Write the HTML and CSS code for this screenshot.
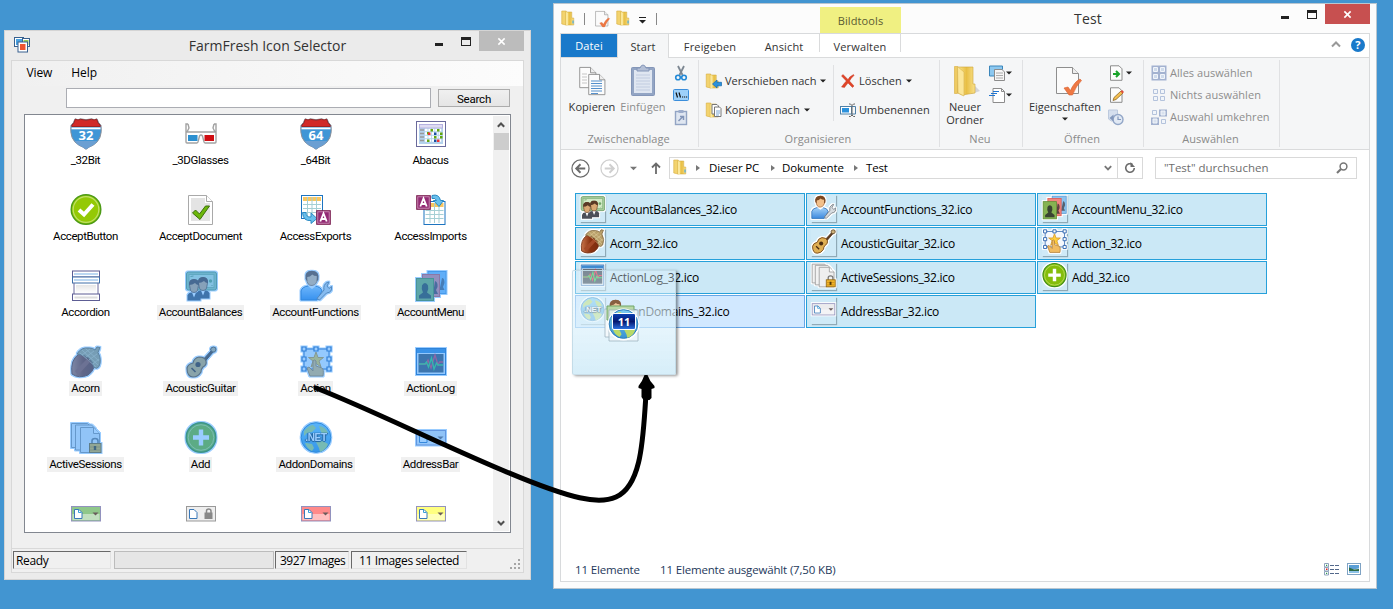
FILE: index.html
```html
<!DOCTYPE html>
<html lang="de">
<head>
<meta charset="utf-8">
<title>FarmFresh Icon Selector</title>
<link rel="stylesheet" href="styles.css">
</head>
<body>
<svg class="defs" width="0" height="0" aria-hidden="true">
  <defs>
    <filter id="tint" x="-10%" y="-10%" width="120%" height="120%" color-interpolation-filters="sRGB">
      <feMorphology in="SourceAlpha" operator="dilate" radius="0.8" result="fat"/>
      <feFlood flood-color="#fff"/><feComposite in2="fat" operator="in" result="halo"/>
      <feFlood flood-color="#3399ff" flood-opacity=".5"/><feComposite in2="fat" operator="in" result="blue"/>
      <feMerge><feMergeNode in="halo"/><feMergeNode in="SourceGraphic"/><feMergeNode in="blue"/></feMerge>
    </filter>
    <filter id="halo" x="-10%" y="-10%" width="120%" height="120%" color-interpolation-filters="sRGB">
      <feMorphology in="SourceAlpha" operator="dilate" radius="1" result="fat"/>
      <feFlood flood-color="#fff"/><feComposite in2="fat" operator="in" result="halo"/>
      <feMerge><feMergeNode in="halo"/><feMergeNode in="SourceGraphic"/></feMerge>
    </filter>
    <linearGradient id="gFolder" x1="0" x2="1"><stop offset="0" stop-color="#fbe58f"/><stop offset=".5" stop-color="#e8bf45"/><stop offset="1" stop-color="#f9e08a"/></linearGradient>
    <linearGradient id="gGlobe" x1="0" x2="0" y1="0" y2="1"><stop offset="0" stop-color="#7fcdf2"/><stop offset="1" stop-color="#3793d2"/></linearGradient>
    <linearGradient id="gBlue" x1="0" x2="0" y1="0" y2="1"><stop offset="0" stop-color="#a5d2f8"/><stop offset="1" stop-color="#3d8ade"/></linearGradient>
    <linearGradient id="gNut" x1="0" x2="1"><stop offset="0" stop-color="#c8744a"/><stop offset=".5" stop-color="#8c3412"/><stop offset="1" stop-color="#7a2c10"/></linearGradient>
    <linearGradient id="gPage" x1="0" x2="0" y1="0" y2="1"><stop offset="0" stop-color="#e6e6e6"/><stop offset="1" stop-color="#fff"/></linearGradient>
  </defs>
  <symbol id="shield" viewBox="0 0 32 32">
    <path d="M5 .8q3 1.800 5.500 0q5.500 1.800 11 0q3 1.800 5.500 0q1 4 4 6.500q2 14-8 20q-4 1.500-7 4q-3-2.500-7-4q-10-6-8-20q3-2.500 4-6.500z" fill="#3f96d6" stroke="#8a8f98"/>
    <path d="M4.500 23q2 3 5 4.500l6.500 3.800l6.500-3.800q3-1.500 5-4.500z" fill="#6b9fd2"/>
    <path d="M5.300 1.300q3 1.400 5.200 0q5.500 1.800 11 0q2.500 1.400 5.200 0q1 4 3.500 6v1.200H1.800V7.300q2.500-2 3.500-6z" fill="#d12a28" stroke="#9b2422" stroke-width="1"/>
    <path d="M1.500 9.500h29v1.800h-29z" fill="#fff"/>
  </symbol>
  <symbol id="glasses" viewBox="0 0 32 32">
    <path d="M3 6H1v18q0 1 1 1h10q1 0 1.500-3l1-4q1.500-2 3 0l1 4q.5 3 1.500 3h10q1 0 1-1V6h-2M3 6l1 4-2 4h28l-2-4 1-4" fill="none" stroke="#a2a2a2" stroke-width="1.400"/>
    <path d="M3 17h9.500v6H3z" fill="#2b8fd0"/><path d="M19.500 17H29v6h-9.500z" fill="#cf0d12"/>
  </symbol>
  <symbol id="abacus" viewBox="0 0 32 32">
    <rect x="1.500" y="3.500" width="29" height="25" fill="#fff" stroke="#6a6a9c"/>
    <rect x="4" y="6" width="24" height="20" fill="#b4d2ec"/><rect x="4.500" y="6.500" width="23" height="3.500" fill="#dedcf2" stroke="#b0a8dc" stroke-width=".8"/>
    <path d="M5 12h4M5 15.500h4M5 19h4M5 22.500h4" stroke="#999" stroke-width="1.500"/>
    <path d="M10 12h17M10 15.500h17M10 19h17M10 22.500h17" stroke="#fff" stroke-width="2.400" stroke-dasharray="2.600 .8"/>
    <path d="M12 14h2.500v2.500H12zM15.500 11h2.500v2.500h-2.500zM22 11h2.500v2.500H22zM25 14.500h2.500V17H25zM19 18h2.500v2.500H19zM12 21.500h2.500V24H12zM25 18h2.500v2.500H25z" fill="#62a50f"/>
    <path d="M13 14.500h2.500V17H13zM22 21.500h2.500V24H22z" fill="#e33"/><path d="M19 14.500h2.500V17H19zM19 21.500h2.500V24H19z" fill="#1b4fa0"/>
  </symbol>
  <symbol id="acceptbtn" viewBox="0 0 32 32">
    <circle cx="16" cy="15.500" r="14.800" fill="#94c905" stroke="#4c9a16" stroke-width="1.400"/><circle cx="16" cy="15.500" r="12.800" fill="none" stroke="#bfe069" stroke-width="1.200"/>
    <path d="M9 16l5 4.500 9-10" fill="none" stroke="#fff" stroke-width="4"/>
  </symbol>
  <symbol id="acceptdoc" viewBox="0 0 32 32">
    <path d="M3.500 1.500h18l6 6v23h-24z" fill="#fff" stroke="#a9a9a9"/><path d="M6 4h14v5h5v18H6z" fill="#e4e4e4"/><path d="M21.500 1.500v6h6" fill="#fff" stroke="#a9a9a9"/>
    <path d="M7.500 19l3-3 4 4 6-8h4l-9.500 13.500z" fill="#6db70a" stroke="#3c6f0d"/>
  </symbol>
  <symbol id="sheet" viewBox="0 0 22 24">
    <rect x=".5" y=".5" width="21" height="23" fill="#fff" stroke="#1d74c0"/><path d="M2 2h18v4H2z" fill="#f8c660"/>
    <path d="M2 9.500h18M2 13.500h18M2 17.500h18M6.500 2v20M11 2v20M15.500 2v20" stroke="#a5cfd4"/>
  </symbol>
  <symbol id="abox" viewBox="0 0 15 15">
    <rect x=".7" y=".7" width="13.600" height="13.600" fill="#932b74" stroke="#7b2252"/><rect x="1.800" y="1.800" width="11.400" height="11.400" fill="none" stroke="#d399bd" stroke-width=".8"/>
    <path d="M4.300 11.500L7.500 3.500l3.200 8M5.500 9h4" stroke="#fff" stroke-width="1.800" fill="none"/>
  </symbol>
  <symbol id="accexp" viewBox="0 0 32 32">
    <use href="#sheet" x="1" y="1" width="22" height="24"/><path d="M2.500 18.500h3.500q0 5 5 4.500v-4l6 5.500-6 5v-3q-8 1-8.500-8z" fill="#69bfec" stroke="#2b8ac4"/>
    <use href="#abox" x="16" y="16" width="15" height="15"/>
  </symbol>
  <symbol id="accimp" viewBox="0 0 32 32">
    <use href="#sheet" x="8" y="7" width="23" height="24"/><path d="M17 1.500q7-2 8.500 5h3l-4.500 6-5.500-6h3q-1-3-4.500-2z" fill="#69bfec" stroke="#2b8ac4"/>
    <use href="#abox" x="1" y="1" width="15" height="15"/>
  </symbol>
  <symbol id="accordion" viewBox="0 0 32 32">
    <rect x="2.500" y="1" width="27" height="6" fill="#fff" stroke="#5d5d94"/><rect x="2.500" y="7" width="27" height="6" fill="#fff" stroke="#3e6fa8"/>
    <path d="M4 13v11M28 13v11" stroke="#6a6a9c"/><rect x="6" y="15" width="20" height="8" fill="url(#gPage)"/><rect x="2.500" y="24" width="27" height="6.500" fill="#fff" stroke="#5d5d94"/>
    <path d="M4 4h24M4 10h24" stroke="#a6ccee" stroke-width="1.400"/><path d="M4.500 27.500h23" stroke="#ddd" stroke-width="2"/>
  </symbol>
  <symbol id="man" viewBox="0 0 14 22">
    <path d="M.5 21.500v-5q1-3 4-3h5q3 0 4 3v5z" fill="#4b4f59"/><path d="M5 13.500l2 5 2-5z" fill="#fff"/>
    <path d="M2.500 6q-.5-5 4.500-5.500Q12 1 11.500 6l-1 5.500q-3.500 4-7 0z" fill="#d9a873" stroke="#6b3f21" stroke-width=".8"/><path d="M2 6q-.5-6 5-6t5 6q-2 .5-4-2-2.500 2-6 2z" fill="#5a3a26"/>
  </symbol>
  <symbol id="balances" viewBox="0 0 32 32">
    <rect x="1.500" y="2" width="30" height="18" rx="2" fill="#a6cc9a" stroke="#6d9c66"/><rect x="4" y="4.500" width="25" height="13" fill="#d3eac6" stroke="#8cb884"/><circle cx="25.500" cy="11" r="1.700" fill="#6fa567"/><path d="M5.500 6.500l3-.5M27.500 15l-1 1" stroke="#6fa567"/>
    <use href="#man" x="11" y="7" width="14" height="22"/><use href="#man" x="2" y="9" width="14" height="22"/>
  </symbol>
  <symbol id="functions" viewBox="0 0 32 32">
    <path d="M1 30v-9q1-4 7-5h7q6 1 7 5l-5 9z" fill="url(#gBlue)" stroke="#2d72b8"/><path d="M8 16l4 3 4-3-1-3H9z" fill="#fff"/>
    <path d="M6.500 8Q6 2 12 1.500T17.500 8q-.5 7-5.500 7.500T6.500 8z" fill="#f2c08a" stroke="#9a5d2c" stroke-width=".8"/><path d="M5.500 9Q4 1 12 .8 20 1 18.300 10l-1.500 1V6q-3 0-4.500-1.500Q10 7 7.200 7v4z" fill="#7a4721"/>
    <path d="M17 28.500l7-8.500q-1-5 3-7.500l2-.5-2 4 2 2.500 2.500-2q1 6-5 6.500L19.500 30z" fill="#d7dce0" stroke="#70767c"/>
  </symbol>
  <symbol id="menu" viewBox="0 0 32 32">
    <rect x="13" y="1.500" width="18" height="22" fill="#8cc3f0" stroke="#5a9bd4"/><path d="M27 8q2.500 0 2.500 5l-1.500 4 1.500 3h-5z" fill="#56606f"/>
    <rect x="7.500" y="4.500" width="17" height="22" fill="#f0877f" stroke="#e0574e"/><path d="M20 11q3 1 2.500 6l-1.500 3 2 4h-5z" fill="#5e4040"/>
    <rect x="1.500" y="8.500" width="17" height="22" fill="#86b352" stroke="#5c8f35"/><path d="M4 28.500v-3l4-3q-2-3-1-7 1-2.500 3-2.500t3 2.500q1 4-1 7l4 3v3z" fill="#3a4433"/>
  </symbol>
  <symbol id="acorn" viewBox="0 0 32 32">
    <path d="M2 28q-2-14 7-20 8-5 14 4 4 11-5 17-9 4-16-1z" fill="url(#gNut)" stroke="#713013"/>
    <path d="M7 8q4-7 12-6 4 0 6 2l2-3 3 .5-2 5q4 7 1 14-2 3-5 1-2-12-17-13.500z" fill="#b9a06a" stroke="#806841"/><path d="M12 4l16 15M16 3l13 12M10 7l16 14M20 3l-8 6M24 5l-8 6M27 8l-8 6M29 13l-6 5" stroke="#ddcc9b" stroke-width=".8"/>
    <path d="M5 25L17 13l3 3L8 29z" fill="#a54a28"/>
  </symbol>
  <symbol id="guitar" viewBox="0 0 32 32">
    <path d="M15 17L27 4l1.500 1.500L17 19z" fill="#5e3a1c" stroke="#4b2f19"/><path d="M25.500 4q0-3 3-3t2.500 3q-1 3-3.500 2z" fill="#ceb17a" stroke="#5b4426"/>
    <path d="M2 22q1-4 6-5 1-5 6-6 6 0 7 4 1 4-3 6-2 2-2 5-3 5-8 5-6 0-6-9z" fill="#dfaf54" stroke="#7b4c19" stroke-width="1.200"/><circle cx="13" cy="18.500" r="2.600" fill="#4a2b10"/><path d="M6.500 22l4 4" stroke="#4a2b10" stroke-width="1.600"/>
  </symbol>
  <symbol id="action" viewBox="0 0 32 32">
    <rect x="4" y="3" width="25" height="20" fill="#f5f8fc" stroke="#2f66b0"/>
    <path d="M16 6l2 5.500h5.500L19 15l2 6-5-3.500L11 21l2-6-4.500-3.500H14z" fill="#ffcf3b" stroke="#d4962b"/>
    <path d="M10 30l-3-8 2-1 4 4V15q1.500-2 3 0v5l6 2q2 1 1 8z" fill="#f1bc62" stroke="#b3803a"/>
    <g fill="#fff" stroke="#2f66b0" stroke-width="1.200"><path d="M2 1h4v4H2zM14 1h4v4h-4zM27 1h4v4h-4zM2 11h4v4H2zM27 11h4v4h-4zM2 21h4v4H2zM27 21h4v4h-4z"/></g>
  </symbol>
  <symbol id="log" viewBox="0 0 32 32">
    <rect x="1.500" y="2.500" width="29" height="26" fill="#f3f7fb" stroke="#2d6cb0"/><path d="M2 3h28v4H2z" fill="#3f8ad0"/><rect x="3.500" y="8" width="25" height="18.500" fill="#45505c"/>
    <path d="M4 18h7l2-4 3 8 4-13 3 10 1.500-3H28" fill="none" stroke="#e8344e" stroke-width="1.300"/><path d="M4 18h6l1.500-2 2 5 3-9 2.500 11 2.500-6 1.500 2H28" fill="none" stroke="#39d45b" stroke-width="1.300"/>
  </symbol>
  <symbol id="sessions" viewBox="0 0 32 32">
    <path d="M1.500 1.500h16l4 4v20h-20z" fill="#f2f2f2" stroke="#969696"/><path d="M5.500 3h16l4 4v21h-20z" fill="#f2f2f2" stroke="#969696"/><path d="M10.500 5.500h13l6 6v19h-19z" fill="#efefef" stroke="#969696"/><path d="M23.500 5.500v6h6" fill="#fff" stroke="#969696"/>
    <path d="M22 22v-3q0-2.500 3-2.500t3 2.500v3" fill="none" stroke="#777" stroke-width="1.600"/><rect x="19.500" y="21.500" width="11.500" height="9" fill="#f0b429" stroke="#8d6310"/><path d="M20 25h10M20 28h10" stroke="#c88c17"/><path d="M25 24v4" stroke="#4f3607" stroke-width="2.400"/>
  </symbol>
  <symbol id="add" viewBox="0 0 32 32">
    <circle cx="16" cy="15.500" r="14.800" fill="#84bd0b" stroke="#3f8d18" stroke-width="1.400"/><circle cx="16" cy="15.500" r="12.800" fill="none" stroke="#bfe069"/>
    <path d="M16 7.500v16M8 15.500h16" stroke="#fff" stroke-width="4.400"/>
  </symbol>
  <symbol id="globe" viewBox="0 0 32 32">
    <circle cx="16" cy="15.500" r="14.800" fill="url(#gGlobe)" stroke="#2b7bb8"/>
    <path d="M4 9q5-6 9-6l3 3-4 4-5 1-3 3zM19 4q7 1 9 7l-4 2-3-3zM16 20l7-1 5 3q-2 6-8 8l-1-4zM6 21l6 1 2 4-2 3q-5-2-7-8z" fill="#b9da68"/>
  </symbol>
  <symbol id="addr" viewBox="0 0 32 32">
    <rect x="1.500" y="8.500" width="29" height="14.500" fill="currentColor" stroke="#9292be"/><path d="M2.500 16h27v6h-27z" fill="#fff" opacity=".45"/>
    <path d="M4.500 11.500h4.500l3 3v6H4.500z" fill="#fff" stroke="#3a78b8"/><path d="M8.500 11.500v3h3" fill="none" stroke="#3a9fd8"/><path d="M22.500 14.500h6l-3 3z" fill="#6a5c5c"/>
  </symbol>
  <symbol id="folder" viewBox="1 0 14.500 16">
    <path d="M2 1h4.500v14L2 14z" fill="#f3d36e" stroke="#d6ad3c" stroke-width=".6"/><path d="M6 2h6v6h2v7H6z" fill="url(#gFolder)" stroke="#cfa435" stroke-width=".5"/><path d="M6.200 2l2 1v12l-2 .5z" fill="#fae79b"/><path d="M13.300 10.500v3" stroke="#53aee0" stroke-width="1.300"/>
  </symbol>
  <symbol id="check" viewBox="0 0 32 32">
    <path d="M4.500 2.500h16l6 6v20h-22z" fill="#fbfbfb" stroke="#8e8e8e"/><path d="M20.500 2.500v6h6" fill="#eee" stroke="#8e8e8e"/><path d="M12 23l4-1 2.500 3.500Q22 17 28 14l1.500 1.500Q24 21 20.500 30h-3.500z" fill="#ee7843" stroke="#d95f2d" stroke-width=".6"/>
  </symbol>
  <symbol id="page" viewBox="0 0 20 24">
    <path d="M.8.8h12l6 6v16.500h-18z" fill="#fcfcfc" stroke="#8c8c8c"/><path d="M12.800.8v6h6" fill="#eee" stroke="#8c8c8c"/>
  </symbol>
  <symbol id="drop" viewBox="0 0 6 4"><path d="M0 .5h6L3 3.500z" fill="currentColor"/></symbol>
</svg>

<main class="desktop">
  <section class="window selector">
    <header class="sel-title">
      <svg class="app-icon" viewBox="0 0 16 16"><g stroke="#38618f" stroke-width="1"><rect x=".5" y=".5" width="9" height="9" fill="#fff"/><path d="M2 2h6v6H2z" fill="#4aa3e2" stroke="none"/><rect x="8.500" y="1.500" width="7" height="8" fill="#fff"/><path d="M9.500 3h5v5h-5z" fill="#9bc850" stroke="none"/><rect x="4" y="5" width="9.500" height="10" fill="#fff"/><path d="M6 7h5.500v6H6z" fill="#ee5430" stroke="none"/></g></svg>
      <h1 class="title-text">FarmFresh Icon Selector</h1>
      <div class="controls"><i class="min"></i><i class="max"></i><span class="close gray"><svg viewBox="0 0 10 10"><path d="M1.500 1.500l7 7M8.500 1.500l-7 7" stroke="#fff" stroke-width="1.700"/></svg></span></div>
    </header>
    <div class="sel-client">
      <nav class="menubar"><span>View</span><span>Help</span></nav>
      <div class="search-row"><div class="field"></div><div class="button">Search</div></div>
      <div class="list">
        <div class="cells">
          <div class="cell"><div class="pic"><svg><use href="#shield"/></svg><b>32</b></div><span>_32Bit</span></div>
          <div class="cell"><div class="pic"><svg><use href="#glasses"/></svg></div><span>_3DGlasses</span></div>
          <div class="cell"><div class="pic"><svg><use href="#shield"/></svg><b>64</b></div><span>_64Bit</span></div>
          <div class="cell"><div class="pic"><svg><use href="#abacus"/></svg></div><span>Abacus</span></div>
          <div class="cell"><div class="pic"><svg><use href="#acceptbtn"/></svg></div><span>AcceptButton</span></div>
          <div class="cell"><div class="pic"><svg><use href="#acceptdoc"/></svg></div><span>AcceptDocument</span></div>
          <div class="cell"><div class="pic"><svg><use href="#accexp"/></svg></div><span>AccessExports</span></div>
          <div class="cell"><div class="pic"><svg><use href="#accimp"/></svg></div><span>AccessImports</span></div>
          <div class="cell"><div class="pic"><svg><use href="#accordion"/></svg></div><span>Accordion</span></div>
          <div class="cell on"><div class="pic"><svg><use href="#balances"/></svg></div><span>AccountBalances</span></div>
          <div class="cell on"><div class="pic"><svg><use href="#functions"/></svg></div><span>AccountFunctions</span></div>
          <div class="cell on"><div class="pic"><svg><use href="#menu"/></svg></div><span>AccountMenu</span></div>
          <div class="cell on"><div class="pic"><svg><use href="#acorn"/></svg></div><span>Acorn</span></div>
          <div class="cell on"><div class="pic"><svg><use href="#guitar"/></svg></div><span>AcousticGuitar</span></div>
          <div class="cell on"><div class="pic"><svg><use href="#action"/></svg></div><span>Action</span></div>
          <div class="cell on"><div class="pic"><svg><use href="#log"/></svg></div><span>ActionLog</span></div>
          <div class="cell on"><div class="pic"><svg><use href="#sessions"/></svg></div><span>ActiveSessions</span></div>
          <div class="cell on"><div class="pic"><svg><use href="#add"/></svg></div><span>Add</span></div>
          <div class="cell on"><div class="pic"><svg><use href="#globe"/></svg><em>.NET</em></div><span>AddonDomains</span></div>
          <div class="cell on"><div class="pic"><svg class="c-grey"><use href="#addr"/></svg></div><span>AddressBar</span></div>
          <div class="cell"><div class="pic"><svg class="c-green"><use href="#addr"/></svg></div></div>
          <div class="cell"><div class="pic"><svg viewBox="0 0 32 32"><rect x="1.500" y="8.500" width="29" height="14.500" fill="#eee" stroke="#999"/><path d="M4.500 11.500h4.500l3 3v6H4.500z" fill="#fff" stroke="#3a78b8"/><path d="M21.500 15v-2q0-2 2.200-2t2.300 2v2" fill="none" stroke="#888" stroke-width="1.500"/><rect x="19.500" y="14.500" width="8" height="6.500" fill="#888"/></svg></div></div>
          <div class="cell"><div class="pic"><svg class="c-red"><use href="#addr"/></svg></div></div>
          <div class="cell"><div class="pic"><svg class="c-yellow"><use href="#addr"/></svg></div></div>
        </div>
        <div class="scroll"><svg viewBox="0 0 8 6"><path d="M.8 4.800L4 1.500l3.200 3.300" fill="none" stroke="#505050" stroke-width="2"/></svg><div class="thumb"></div><svg class="down" viewBox="0 0 8 6"><path d="M.8 1.200L4 4.500l3.200-3.300" fill="none" stroke="#505050" stroke-width="2"/></svg></div>
      </div>
      <footer class="sel-status"><div class="panel p1">Ready</div><div class="progress"></div><div class="panel p2">3927 Images</div><div class="panel p3">11 Images selected</div>
        <svg class="grip" viewBox="0 0 10 10" fill="#a5a5a5"><path d="M8 0h2v2H8zM4 4h2v2H4zM8 4h2v2H8zM0 8h2v2H0zM4 8h2v2H4zM8 8h2v2H8z"/></svg></footer>
    </div>
  </section>

  <section class="window explorer">
    <header class="ex-title">
      <div class="quick"><svg class="s16"><use href="#folder"/></svg><i class="bar"></i><svg class="q18"><use href="#check"/></svg><svg class="s16 q3"><use href="#folder"/></svg><svg class="cust" viewBox="0 0 7 7"><path d="M0 0h7v1H0zM0 3h7L3.500 6.500z" fill="#222"/></svg><i class="bar"></i></div>
      <div class="tooltab">Bildtools</div>
      <h2 class="title-text">Test</h2>
      <div class="controls"><i class="min"></i><i class="max"></i><span class="close red"><svg viewBox="0 0 10 10"><path d="M1.500 1.500l7 7M8.500 1.500l-7 7" stroke="#fff" stroke-width="1.800"/></svg></span></div>
    </header>
    <div class="ex-client">
      <nav class="tabs"><span class="tab file">Datei</span><span class="tab start">Start</span><span class="tab t3">Freigeben</span><span class="tab t4">Ansicht</span><span class="tab t5">Verwalten</span>
        <svg class="fold" viewBox="0 0 10 7"><path d="M1 5.500L5 1.500l4 4" fill="none" stroke="#999" stroke-width="2"/></svg><span class="help">?</span></nav>
      <div class="ribbon">
        <div class="group g1">
          <div class="tools">
            <div class="big b1"><svg viewBox="0 0 32 32"><use href="#page" x="3" y="1" width="18" height="23"/><use href="#page" x="12" y="8" width="18" height="23"/><path d="M6 9h5M6 12h5M6 15h5M6 18h5" stroke="#c6c6c6"/><path d="M15 16h11M15 18.500h11M15 21h11M15 23.500h11M15 26h11M15 28.500h7" stroke="#5590cc" stroke-width="1.200"/></svg><span>Kopieren</span></div>
            <div class="big b2 off"><svg viewBox="0 0 32 32"><rect x="4.500" y="2.500" width="23" height="28" rx="1" fill="#93a5c4" stroke="#8496b8"/><rect x="7" y="5" width="18" height="23" fill="#dfe6f1"/><path d="M9 10h14M9 13h14M9 16h14M9 19h14M9 22h14M9 25h14" stroke="#c1cce0"/><path d="M10 6V3h3q1-3 3-3t3 3h3v3z" fill="#b3bfd6" stroke="#8496b8"/></svg><span>Einfügen</span></div>
            <div class="col c1">
              <svg class="s16" viewBox="0 0 16 16"><path d="M5 1l4.500 9M11 1L6.500 10" stroke="#7d8792" stroke-width="1.800"/><circle cx="5" cy="12.500" r="2.300" fill="none" stroke="#2389d6" stroke-width="1.600"/><circle cx="11" cy="12.500" r="2.300" fill="none" stroke="#2389d6" stroke-width="1.600"/></svg>
              <svg class="s16" viewBox="0 0 16 16"><rect x=".5" y="2.500" width="15" height="11" rx="1" fill="#9dd0fa" stroke="#3b8edb"/><path d="M3 5.500l1.500 5M6 5.500l1.500 5M9 10h1.200M11 10h1.200M13 10h1.200" stroke="#111" stroke-width="1.200"/></svg>
              <svg class="s16" viewBox="0 0 16 16"><rect x="2.500" y="2.500" width="11" height="13" fill="#dfe6f1" stroke="#92a4c4" stroke-width="1.400"/><path d="M5.500 1h5v3h-5z" fill="#9caccb"/><path d="M5.500 12l4-4M7 7.500h3.500V11" fill="none" stroke="#8295b8" stroke-width="1.500"/></svg>
            </div>
          </div><div class="caption">Zwischenablage</div>
        </div>
        <div class="group g2">
          <div class="tools">
            <div class="col c2">
              <div class="cmd"><svg class="s16" viewBox="0 0 16 16"><use href="#folder" x="-1" width="15" height="16"/><path d="M6.500 11l4.500-4v2.300h4.500v3.500H11V15z" fill="#2b91dc" stroke="#1469ad" stroke-width=".7"/></svg><span>Verschieben nach</span><svg class="drop"><use href="#drop"/></svg></div>
              <div class="cmd"><svg class="s16" viewBox="0 0 16 16"><use href="#folder" x="-1" width="15" height="16"/><path d="M6 2.500h5l1.500 1.500v8H6z" fill="#fff" stroke="#777"/><path d="M8.500 5h5l1.500 1.500v8H8.500z" fill="#fff" stroke="#777"/><path d="M10 9h4M10 11h4M10 13h3" stroke="#5590cc" stroke-width=".8"/></svg><span>Kopieren nach</span><svg class="drop"><use href="#drop"/></svg></div>
            </div>
            <div class="col c3">
              <div class="cmd"><svg class="s16" viewBox="0 0 16 16"><path d="M1.500 3L3 1.500l5 5Q10 3 13.500 1.500l.5 1Q11 5 9.500 8l4.500 5-1.500 1.500-4.500-4.500q-2.500 3-3.500 4.500L1.500 14Q4 10.500 6.300 8z" fill="#e04428" stroke="#c03018" stroke-width=".4"/></svg><span>Löschen</span><svg class="drop"><use href="#drop"/></svg></div>
              <div class="cmd"><svg class="s16" viewBox="0 0 16 16"><rect x=".5" y="4.500" width="11" height="7.500" fill="#fff" stroke="#4d80a8"/><path d="M2 6h7v4.500H2z" fill="#2b91dc"/><path d="M12 4.500h3.500V12H12" fill="none" stroke="#4d80a8"/><path d="M9 2h1.500L12 3.500 13.500 2H15M12 3.500v9.500M9 14.500h1.500L12 13l1.500 1.500H15" fill="none" stroke="#666"/></svg><span>Umbenennen</span></div>
            </div>
          </div><div class="caption">Organisieren</div>
        </div>
        <div class="group g3">
          <div class="tools">
            <div class="big b3"><svg viewBox="0 0 32 32"><path d="M22 29l9-3-5-5z" fill="#c6c8cc" opacity=".7"/><path d="M5.500 1.500h3v27l-3 0z" fill="#efcb62" stroke="#d6ad3c" stroke-width=".6"/><path d="M9 2h15v17h2v9l-13 2-4-2z" fill="url(#gFolder)" stroke="#cfa435" stroke-width=".6"/><path d="M8.500 1.500l6.500 5.500v24l-6-3z" fill="#fbe699" stroke="#d9b44c" stroke-width=".6"/></svg><span>Neuer<br>Ordner</span></div>
            <div class="col c4">
              <div class="cmd"><svg class="s16" viewBox="0 0 16 16"><path d="M.5 1h13v3.500H6V11H.5z" fill="#8cc8f0" stroke="#3b86bb"/><path d="M5.500 4.500h7.500l2.500 2.500v8.500h-10z" fill="#f6f6f6" stroke="#8c8c8c"/><path d="M7 8h7M7 10.500h7M7 13h7" stroke="#999" stroke-width=".8"/></svg><svg class="drop"><use href="#drop"/></svg></div>
              <div class="cmd"><svg class="s16" viewBox="0 0 16 16"><path d="M4 1.500h8.500l3 3v11H4z" fill="#fff" stroke="#8c8c8c"/><path d="M12.500 1.500v3h3" fill="none" stroke="#8c8c8c"/><path d="M4 4.500h6M2 6.500h6M0 8.500h6" stroke="#2276d0" stroke-width="1.200"/></svg><svg class="drop"><use href="#drop"/></svg></div>
            </div>
          </div><div class="caption">Neu</div>
        </div>
        <div class="group g4">
          <div class="tools">
            <div class="big b4"><svg class="props"><use href="#check"/></svg><span>Eigenschaften</span><svg class="drop"><use href="#drop"/></svg></div>
            <div class="col c5">
              <div class="cmd"><svg class="s16" viewBox="0 0 16 16"><path d="M2.500.8h8.500l3 3v11.500H2.500z" fill="#fcfcfc" stroke="#8c8c8c"/><path d="M5 9h5M8 6l3 3-3 3" fill="none" stroke="#18a329" stroke-width="2"/></svg><svg class="drop"><use href="#drop"/></svg></div>
              <div class="cmd"><svg class="s16" viewBox="0 0 16 16"><path d="M2.500.8h8.500l3 3v11.500H2.500z" fill="#fcfcfc" stroke="#8c8c8c"/><path d="M5 13.500l1-3 7-6.500 2 2-7 6.500z" fill="#f5bf4f" stroke="#896526" stroke-width=".8"/><path d="M12.500 4.500L14 3l2 2-1.500 1.500z" fill="#de4d3c"/></svg></div>
              <div class="cmd"><svg class="s16" viewBox="0 0 16 16"><path d="M.5 1h9v9l-6 2-3-2z" fill="#d5dfee" stroke="#bdcade"/><circle cx="10" cy="10.500" r="5" fill="#e1e9f4" stroke="#93a7c8" stroke-width="1.400"/><path d="M10 7.500v3h3" fill="none" stroke="#8398bc" stroke-width="1.200"/><path d="M1.500 9l4-3.500v7z" fill="#8398bc"/></svg></div>
            </div>
          </div><div class="caption">Öffnen</div>
        </div>
        <div class="group g5 off">
          <div class="tools">
            <div class="col c6">
              <div class="cmd"><svg class="s16" viewBox="0 0 16 16"><path d="M.5.5h15v15H.5z" fill="#a3b2d0"/><path d="M2.500 2.500h4v4h-4zM9.500 2.500h4v4h-4zM2.500 9.500h4v4h-4zM9.500 9.500h4v4h-4z" fill="#cfdbeb" stroke="#f1f5fa"/></svg><span>Alles auswählen</span></div>
              <div class="cmd"><svg class="s16" viewBox="0 0 16 16"><path d="M2.500 2.500h4v4h-4zM9.500 2.500h4v4h-4zM2.500 9.500h4v4h-4zM9.500 9.500h4v4h-4z" fill="#f1f5fa" stroke="#b4c3dc"/></svg><span>Nichts auswählen</span></div>
              <div class="cmd"><svg class="s16" viewBox="0 0 16 16"><path d="M8 .5h8v7H8zM0 8.500h8v7.500H0z" fill="#a3b2d0"/><path d="M10 2h4v4h-4zM2 10h4v4H2z" fill="#d8e1ee" stroke="#f1f5fa"/><path d="M1.500 1.500h4v4h-4zM10.500 10.500h4v4h-4z" fill="#f1f5fa" stroke="#b4c3dc"/></svg><span>Auswahl umkehren</span></div>
            </div>
          </div><div class="caption">Auswählen</div>
        </div>
      </div>
      <div class="navrow">
        <svg class="circ" viewBox="0 0 20 20"><circle cx="10" cy="10" r="9" fill="none" stroke="#6b6b6b" stroke-width="1.300"/><path d="M15 10H6M10 5.500L5.500 10l4.500 4.500" fill="none" stroke="#6b6b6b" stroke-width="2"/></svg>
        <svg class="circ fw" viewBox="0 0 20 20"><circle cx="10" cy="10" r="9" fill="none" stroke="#cfcfcf" stroke-width="1.300"/><path d="M5 10h9M10 5.500l4.500 4.500-4.500 4.500" fill="none" stroke="#cfcfcf" stroke-width="2"/></svg>
        <svg class="hist" viewBox="0 0 6 4"><path d="M0 .5h6L3 3.500z" fill="#777"/></svg>
        <svg class="up" viewBox="0 0 10 12"><path d="M5 12V2M1 5.500L5 1.500l4 4" fill="none" stroke="#6b6b6b" stroke-width="1.800"/></svg>
        <div class="address"><svg class="s16"><use href="#folder"/></svg><i class="arr"></i><span class="w1">Dieser PC</span><i class="arr"></i><span class="w2">Dokumente</span><i class="arr"></i><span>Test</span>
          <svg class="chev" viewBox="0 0 8 6"><path d="M.8 1.200L4 4.500l3.200-3.300" fill="none" stroke="#777" stroke-width="1.800"/></svg><span class="reload"><svg viewBox="0 0 12 12"><path d="M8.500 2.500A4.300 4.300 0 1 0 10.300 6" fill="none" stroke="#6b6b6b" stroke-width="1.600"/><path d="M6.500 0v5H11z" fill="#6b6b6b"/></svg></span></div>
        <div class="find"><span>"Test" durchsuchen</span><svg viewBox="0 0 12 12"><circle cx="7.500" cy="4.500" r="3.400" fill="none" stroke="#777" stroke-width="1.500"/><path d="M5 7L1 11" stroke="#777" stroke-width="2.200"/></svg></div>
      </div>
      <div class="files">
        <div class="file-item"><div class="tile"><svg><use href="#balances"/></svg></div><span>AccountBalances_32.ico</span></div>
        <div class="file-item"><div class="tile"><svg><use href="#functions"/></svg></div><span>AccountFunctions_32.ico</span></div>
        <div class="file-item"><div class="tile"><svg><use href="#menu"/></svg></div><span>AccountMenu_32.ico</span></div>
        <div class="file-item"><div class="tile"><svg><use href="#acorn"/></svg></div><span>Acorn_32.ico</span></div>
        <div class="file-item"><div class="tile"><svg><use href="#guitar"/></svg></div><span>AcousticGuitar_32.ico</span></div>
        <div class="file-item"><div class="tile"><svg><use href="#action"/></svg></div><span>Action_32.ico</span></div>
        <div class="file-item"><div class="tile"><svg><use href="#log"/></svg></div><span>ActionLog_32.ico</span></div>
        <div class="file-item"><div class="tile"><svg><use href="#sessions"/></svg></div><span>ActiveSessions_32.ico</span></div>
        <div class="file-item"><div class="tile"><svg><use href="#add"/></svg></div><span>Add_32.ico</span></div>
        <div class="file-item hot"><div class="tile"><svg><use href="#globe"/></svg><em>.NET</em></div><span>AddonDomains_32.ico</span></div>
        <div class="file-item"><div class="tile"><svg class="c-grey"><use href="#addr"/></svg></div><span>AddressBar_32.ico</span></div>
      </div>
      <footer class="ex-status"><span class="n1">11 Elemente</span><span class="n2">11 Elemente ausgewählt (7,50 KB)</span>
        <svg class="v1" viewBox="0 0 15 13"><path d="M.5.500h4v3.500h-4zM.5 4.500h4v3.500h-4zM.5 8.500h4v3.500h-4z" fill="#fff" stroke="#8fa3bd"/><path d="M2 1.800h1.200v1.200H2zM2 9.800h1.200V11H2z" fill="#2a9a4a"/><path d="M2 5.600h1.500v1.500H2z" fill="#d22"/><path d="M6 2.500h4M11 2.500h4M6 6.500h4M11 6.500h4M6 10.500h4M11 10.500h4" stroke="#53688b"/></svg>
        <svg class="v2" viewBox="0 0 14 12"><rect x=".5" y=".5" width="13" height="11" fill="#fff" stroke="#7fa3c4"/><path d="M2 2h10v3.500L2 7z" fill="#5b9fd6"/><path d="M2 4.500l5 2 5-.5v2.500H2z" fill="#2c6b46"/><path d="M2 8h10v2H2z" fill="#8ec3e8"/></svg></footer>
    </div>
  </section>

  <div class="drag"><svg class="stack" viewBox="0 0 44 44"><g opacity=".85"><use href="#functions" x="4" y="0" width="28" height="28"/></g><path d="M4 10h28v28H4z" fill="#f4f9fc" stroke="#9fb4c0" stroke-width=".8"/><path d="M6 7h27v14H6z" fill="#b9d8a8" stroke="#6fa567"/><path d="M8 11h29v31H8z" fill="#eff7fb" fill-opacity=".75" stroke="#9fb4c0" stroke-width=".8"/><circle cx="22.500" cy="25.500" r="16" fill="#fff"/><use href="#globe" x="7" y="10" width="31" height="31"/></svg><b class="count">11</b></div>
  <svg class="arrow" viewBox="0 0 345 135"><path d="M4 15C60 37 118 66.500 190 97S287 131.500 304 124C331 112 331 60 334 22" fill="none" stroke="#000" stroke-width="5" stroke-linecap="round"/><path d="M333.500 2h2q2 6 7 11v2l-3 1v9l-2 2h-6l-2-3v-8l-3-1v-2q4-5 6-11z"/></svg>
</main>
</body>
</html>
```
FILE: styles.css
```css
* { box-sizing: border-box; }
body { margin: 0; overflow: hidden; font-family: "Open Sans", "Noto Sans", sans-serif; font-size: 11.500px; color: #000; }
svg { display: block; flex: none; overflow: visible; }
.defs { position: absolute; }
i, em { font-style: normal; }
span { white-space: nowrap; }
.desktop { position: relative; width: 1393px; height: 609px; background: #4295d1; overflow: hidden; }
.window { position: absolute; display: flex; flex-direction: column; }
.title-text { margin: 0; font-weight: 400; color: #333; text-align: center; flex: 1; }

/* Title bar buttons */
.controls { display: flex; align-items: flex-start; }
.min { width: 8px; height: 3px; margin: 12px 18px 0 0; background: #222; }
.max { width: 10px; height: 9px; margin: 6px 8px 0 0; border: 1px solid #222; border-top-width: 3px; }
.close { width: 45px; height: 20px; display: flex; align-items: center; justify-content: center; }
.close svg { width: 9px; height: 9px; }
.gray { background: #bcbcbc; }
.red { background: #c75050; }

/* Icon selector window */
.selector { left: 4px; top: 30px; width: 527px; height: 550px; background: #ebebeb; border: 1px solid #d4d4d4; padding: 0 6px 6px; }
.sel-title { height: 29px; display: flex; }
.app-icon { width: 16px; height: 16px; margin: 6px 0 0 3px; }
.sel-title .title-text { font-size: 14px; line-height: 29px; padding-left: 70px; letter-spacing: 0; }
.sel-client { flex: 1; display: flex; flex-direction: column; border: 1px solid #d8d8d8; background: #f0f0f0; }
.menubar { height: 25px; display: flex; gap: 19px; padding-left: 14.500px; line-height: 24px; font-size: 12px; letter-spacing: -.1px; background: linear-gradient(90deg, #f0f0f0, #fcfcfc); }
.search-row { display: flex; gap: 7px; padding: 2px 0 0 54px; height: 28px; }
.field { width: 365px; height: 20px; background: #fff; border: 1px solid #abadb3; }
.button { width: 72px; height: 18px; margin-top: 1px; border: 1px solid #acacac; background: linear-gradient(#f0f0f0, #e5e5e5); text-align: center; font: 11.500px/18px Roboto, sans-serif; letter-spacing: -.2px; }
.list { margin-left: 12px; width: 487px; height: 419px; border: 1px solid #828790; background: #fff; display: flex; overflow: hidden; }
.cells { width: 467.500px; padding: 3px 0 0 3.500px; display: grid; grid-template-columns: repeat(4, 115px); grid-auto-rows: 76px; }
.cell { display: flex; flex-direction: column; align-items: center; gap: 3px; font-family: Roboto, sans-serif; font-size: 11.500px; letter-spacing: -.4px; }
.cell > span { height: 15px; line-height: 15px; padding: 0 2px; margin-right: 1px; }
.pic { width: 32px; height: 32px; position: relative; }
.pic svg { width: 32px; height: 32px; }
.pic b { position: absolute; inset: 8px 0 auto; text-align: center; color: #fff; font: 700 13px/18px "Open Sans", sans-serif; letter-spacing: 0; }
.pic em, .tile em { position: absolute; inset: 10px 0 auto; text-align: center; color: #fff; font: 700 10px/11px "Liberation Sans", sans-serif; letter-spacing: -.3px; text-shadow: 0 0 1px #134, 1px 0 1px #134, -1px 0 1px #134, 0 1px 1px #134; }
.on .pic { filter: url(#tint); }
.on > span { background: #f0f0f0; }
.c-grey { color: #ececee; }
.c-green { color: #8fc78a; }
.c-red { color: #ff8a8a; }
.c-yellow { color: #ffff80; }
.scroll { width: 16px; background: #f0f0f0; margin: 1px 0 1px .5px; display: flex; flex-direction: column; align-items: center; }
.scroll svg { width: 8px; height: 6px; margin: 6px 0 5px; }
.thumb { width: 15px; height: 17px; background: #cdcdcd; }
.scroll .down { margin-top: auto; margin-bottom: 5px; }
.sel-status { margin-top: 15px; height: 24px; border-top: 1px solid #d9d9d9; padding: 2px 3px 0 1px; display: flex; font-size: 12px; line-height: 18px; letter-spacing: -.35px; }
.panel { height: 18px; border: 1px solid #e2e2e2; border-top-color: #696969; border-left-color: #696969; white-space: nowrap; }
.p1 { width: 98px; padding-left: 2px; }
.progress { width: 160px; height: 18px; margin: 0 1px 0 3px; background: #e6e6e6; border: 1px solid #bcbcbc; }
.p2 { width: 74px; padding-left: 4px; margin-right: 2px; letter-spacing: -.5px; }
.p3 { width: 116px; padding-left: 7px; }
.grip { width: 10px; height: 10px; margin: 8px 0 0 auto; }

/* Explorer window */
.explorer { left: 553px; top: 3px; width: 824px; height: 586px; background: #fcfcfc; border: 1px solid #b9c6d0; padding: 0 6px 6px; }
.ex-title { height: 29px; display: flex; }
.quick { width: 260px; display: flex; align-items: flex-start; padding: 6px 0 0 0; }
.s16 { width: 16px; height: 16px; }
.bar { width: 1px; height: 12px; margin: 3px 0 0 8px; background: #888; }
.q18 { width: 18px; height: 18px; margin: 0 3px 0 8px; }
.q3 { margin: 0 8px 0 1px; }
.cust { width: 7px; height: 7px; margin: 7px 0 0 0; }
.cust + .bar { margin-left: 10px; }
.tooltab { width: 81px; height: 27px; margin-top: 3px; background: #f0f082; text-align: center; line-height: 28px; color: #5b5b33; font-size: 11px; letter-spacing: .1px; }
.ex-title .title-text { font-size: 14px; line-height: 29px; text-align: left; padding-left: 173px; letter-spacing: .2px; }
.ex-client { flex: 1; display: flex; flex-direction: column; border: 1px solid #d8dadc; background: #fff; }
.tabs { height: 24px; border-bottom: 1px solid #dadbdc; display: flex; line-height: 25px; font-size: 11px; letter-spacing: .15px; color: #333; }
.tab { height: 23px; text-align: center; }
.file { width: 56px; background: #1979ca; color: #fff; line-height: 23px; }
.start { width: 52px; height: 24px; background: #f5f6f7; border: 1px solid #dadbdc; border-width: 0 1px; }
.t3 { width: 82px; }
.t4 { width: 68px; padding-right: 2px; }
.t5 { width: 82px; border: 1px solid #dadbdc; border-width: 0 1px; height: 18px; }
.fold { width: 10px; height: 7px; margin: 7px 0 0 430px; }
.help { width: 14px; height: 14px; margin: 4px 0 0 10px; border-radius: 50%; background: #1979ca; color: #fff; font-weight: 700; font-size: 11px; line-height: 14px; text-align: center; }
.ribbon { height: 92px; background: #f5f6f7; border-bottom: 1px solid #dadbdc; display: flex; font-size: 11px; letter-spacing: .04px; color: #333; }
.group { height: 87px; margin-top: 2px; border-right: 1px solid #e0e1e3; display: flex; flex-direction: column; }
.g1 { width: 138px; }
.g2 { width: 241px; }
.g3 { width: 83px; }
.g4 { width: 121px; }
.g5 { width: 136px; }
.tools { height: 71px; flex: none; display: flex; padding-top: 5px; }
.caption { text-align: center; line-height: 16px; padding-right: 2px; color: #8a8a8a; }
.off { color: #8d8d8d; }
.big { display: flex; flex-direction: column; align-items: center; line-height: 13px; text-align: center; }
.big > svg { width: 32px; height: 32px; margin-bottom: 3px; }
.big > .props { margin-left: 5px; }
.big > .drop { width: 6px; height: 4px; margin: 4px 0 0; }
.drop { width: 6px; height: 4px; color: #222; }
.b1 { width: 50px; margin-left: 6px; }
.b2 { width: 50px; margin-left: 1px; }
.b3 { width: 40px; margin-left: 5px; }
.b4 { width: 74px; margin-left: 5px; }
.cmd { display: flex; align-items: center; height: 16px; }
.cmd .drop { margin-left: 4px; margin-top: -1px; }
.cmd span { margin: -2px 0 0 3px; }
.col { display: flex; flex-direction: column; gap: 6px; }
.c1 { margin-left: 5px; }
.c2 { margin: 8px 0 0 7px; gap: 13px; width: 127px; }
.c3 { border-left: 1px solid #e0e1e3; height: 56px; margin-top: 0; padding: 8px 0 0 6px; gap: 13px; }
.c4 { margin-left: 4px; }
.c4 .drop { margin-left: 1px; }
.c5 { margin-left: 6px; }
.c5 .drop { margin-left: 2px; }
.c6 { margin-left: 7px; }

/* Navigation row */
.navrow { height: 37px; display: flex; padding: 7px 0 0 10px; font-size: 12px; }
.circ { width: 19px; height: 19px; margin-top: 1.500px; }
.fw { margin-left: 10px; }
.hist { width: 7px; height: 5px; margin: 9px 0 0 11px; }
.up { width: 10px; height: 12px; margin: 5px 0 0 14px; }
.address { width: 474px; height: 22px; margin-left: 8px; border: 1px solid #d9d9d9; display: flex; align-items: center; padding-left: 2px; font-size: 11.500px; letter-spacing: -.15px; }
.address > .s16, .address > .arr + span, .find > span { margin-top: -2px; }
.arr { border: 3px solid transparent; border-left: 4px solid #777; border-right: 0; margin: 0 8px; }
.w1 { width: 54px; margin-left: 1px; }
.w2 { width: 64px; margin-left: -1px; }
.chev { width: 8px; height: 6px; margin-left: auto; }
.reload { width: 25px; height: 20px; margin-left: 5px; border-left: 1px solid #d9d9d9; display: flex; align-items: center; justify-content: center; }
.reload svg { width: 12px; height: 12px; }
.find { width: 202px; height: 22px; margin-left: 12px; border: 1px solid #d9d9d9; display: flex; justify-content: space-between; align-items: center; padding: 0 8px; color: #6d6d6d; font-size: 11.500px; }
.find svg { width: 12px; height: 12px; }

/* File tiles */
.files { display: grid; grid-template-columns: repeat(3, 230px); grid-auto-rows: 33px; gap: 1px; padding: 6px 0 0 14px; height: 360px; align-content: start; }
.file-item { border: 1px solid #26a0da; background: #cbe8f6; display: flex; align-items: center; padding: 0 0 0 4px; gap: 5px; font-size: 12px; letter-spacing: -.28px; }
.hot { background: #d1e8ff; border-color: #66a7e8; }
.tile { width: 25px; height: 27px; margin-top: -3px; position: relative; box-shadow: 1px 1px 1px #8fa9b6; background: #cfeaf7; }
.tile svg { width: 25px; height: 25px; filter: url(#halo); }
.tile em { top: 7px; font-size: 8px; }
.ex-status { margin-top: auto; height: 21px; display: flex; padding: 0 8px 0 14px; line-height: 19px; font-size: 11.500px; letter-spacing: -.16px; color: #1e395b; }
.n1 { width: 85px; }
.v1 { width: 15px; height: 13px; margin: 3px 8px 0 auto; }
.v2 { width: 14px; height: 12px; margin-top: 3px; }

/* Drag preview and pointer path, floating over both windows */
.drag { position: absolute; left: 572px; top: 270px; width: 104px; height: 105px; border: 1px solid rgba(190, 215, 228, .8); border-radius: 2px; background: linear-gradient(rgba(225, 243, 253, .35), rgba(222, 242, 252, .65) 45%, rgba(210, 236, 248, .9)); box-shadow: 2px 1px 3px rgba(0, 0, 0, .4); }
.stack { width: 44px; height: 44px; margin: 28px 0 0 28px; }
.count { position: absolute; left: 39px; top: 42px; width: 24px; height: 17px; border: 1px solid #fff; border-radius: 2px; background: linear-gradient(#0b3fb0, #05176f 50%, #2a6fe0); color: #fff; font-size: 11px; line-height: 15px; text-align: center; }
.arrow { position: absolute; left: 312px; top: 373px; width: 345px; height: 135px; }
```
